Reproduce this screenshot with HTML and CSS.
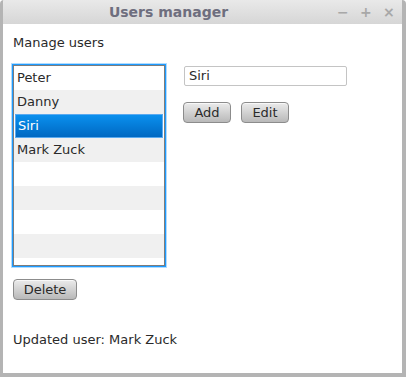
FILE: index.html
```html
<!DOCTYPE html>
<html>
<head>
<meta charset="utf-8">
<link rel="stylesheet" href="styles.css">
</head>
<body>
<div class="window">
  <div class="titlebar">
    <div class="title">Users manager</div>
    <div class="controls">
      <span class="ctl">&#8722;</span>
      <span class="ctl">+</span>
      <span class="ctl x">&#215;</span>
    </div>
  </div>
  <div class="content">
    <div class="label">Manage users</div>
    <div class="main">
      <div class="list">
        <div class="row">Peter</div>
        <div class="row odd">Danny</div>
        <div class="row sel">Siri</div>
        <div class="row odd">Mark Zuck</div>
        <div class="row"></div>
        <div class="row odd"></div>
        <div class="row"></div>
        <div class="row odd"></div>
        <div class="row"></div>
      </div>
      <div class="side">
        <div class="field">Siri</div>
        <div class="buttons">
          <div class="btn">Add</div>
          <div class="btn">Edit</div>
        </div>
      </div>
    </div>
    <div class="btn delete">Delete</div>
    <div class="label status">Updated user: Mark Zuck</div>
  </div>
</div>
</body>
</html>
```

FILE: styles.css
```css
html, body {
  margin: 0;
  padding: 0;
  background: #ffffff;
}
body {
  font-family: "DejaVu Sans", sans-serif;
  font-size: 13px;
  color: #2a2a2a;
}
.window {
  width: 406px;
  height: 377px;
  box-sizing: border-box;
  border: 3px solid #b4b4b4;
  border-top: none;
  border-right-width: 4px;
  border-bottom-width: 4px;
  border-radius: 4px 4px 0 0;
  background: #ffffff;
  display: flex;
  flex-direction: column;
  overflow: hidden;
}
.titlebar {
  height: 24px;
  margin: 0 -4px 0 -3px;
  background: linear-gradient(#e9e9e9, #d6d6d6);
  border-radius: 4px 4px 0 0;
  position: relative;
  display: flex;
  align-items: center;
  justify-content: center;
  flex-shrink: 0;
}
.title {
  font-weight: bold;
  font-size: 14px;
  color: #6e6e7e;
  margin-left: -69px;
}
.controls {
  position: absolute;
  right: 12px;
  top: 4px;
  display: flex;
  gap: 12px;
  color: #a8a8a8;
  font-size: 14px;
  font-weight: bold;
}
.ctl { width: 11px; text-align: center; }
.content {
  padding: 11px 0 0 10px;
  display: flex;
  flex-direction: column;
  align-items: flex-start;
}
.label {
  line-height: 15px;
}
.main {
  display: flex;
  margin-top: 15px;
}
.list {
  width: 150px;
  height: 199px;
  border: 1px solid #7c7c7c;
  box-shadow: 0 0 0 1px #1e9bff, 0 0 0 2px rgba(30,155,255,0.35);
  overflow: hidden;
  background: #ffffff;
}
.row {
  height: 24px;
  line-height: 24px;
  padding-left: 3px;
  box-sizing: border-box;
}
.row.odd { background: #f0f0f0; }
.row.sel {
  color: #ffffff;
  background: linear-gradient(#0a90ee, #0068c2);
  border: 1px solid #5aaaf0;
  line-height: 22px;
  margin: 0 1px;
  padding-left: 2px;
}
.side {
  margin-left: 18px;
  padding-top: 1px;
  display: flex;
  flex-direction: column;
}
.field {
  width: 157px;
  height: 18px;
  line-height: 18px;
  border: 1px solid #c4c4c4;
  border-radius: 2px;
  padding-left: 4px;
  margin-left: 1px;
}
.buttons {
  margin-top: 16px;
  display: flex;
  gap: 10px;
}
.btn {
  width: 46px;
  height: 19px;
  line-height: 19px;
  text-align: center;
  border: 1px solid #8c8c8c;
  border-radius: 4px;
  background: linear-gradient(#ebebeb, #b9b9b9);
  box-shadow: inset 0 1px 0 #f8f8f8;
}
.delete {
  width: 62px;
  margin-top: 13px;
}
.status {
  margin-top: 32px;
}
```
